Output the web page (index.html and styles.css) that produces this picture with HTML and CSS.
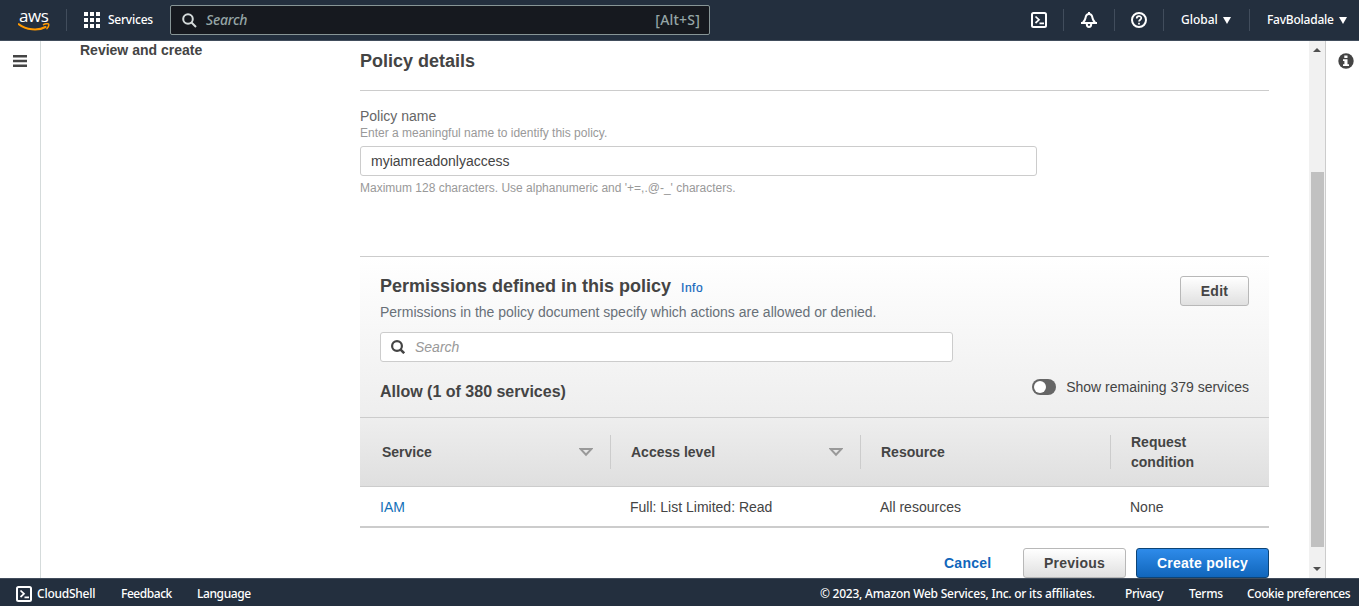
FILE: index.html
```html
<!DOCTYPE html>
<html lang="en">
<head>
<meta charset="utf-8">
<title>Create policy</title>
<link rel="stylesheet" href="styles.css">
</head>
<body>
<header class="topbar">
  <div class="logo"><span class="logo-text">aws</span>
    <svg class="smile" width="32" height="9" viewBox="0 0 32 9"><path d="M.8 1.2C8 7 20 8 27.5 4" fill="none" stroke="#f90" stroke-width="2.1" stroke-linecap="round"/><path d="M25.5 1.6C27 .6 30 .4 30.6 1.1C31 2 30.3 4.2 29 5.6" fill="none" stroke="#f90" stroke-width="1.5" stroke-linecap="round"/></svg>
  </div>
  <i class="sep sep-logo"></i>
  <svg class="grid-icon" width="16" height="16" viewBox="0 0 16 16" fill="#fff"><path d="M0 0h4v4H0zM6 0h4v4H6zM12 0h4v4h-4zM0 6h4v4H0zM6 6h4v4H6zM12 6h4v4h-4zM0 12h4v4H0zM6 12h4v4H6zM12 12h4v4h-4z"/></svg>
  <span class="services">Services</span>
  <div class="search-top">
    <svg width="15" height="15" viewBox="0 0 15 15" fill="none" stroke="#d5dbdb" stroke-width="2"><circle cx="6" cy="6" r="4.8"/><path d="M9.5 9.5 14 14"/></svg>
    <span class="ph">Search</span><span class="kbd">[Alt+S]</span>
  </div>
  <div class="tools">
    <svg class="shell" width="16" height="16" viewBox="0 0 16 16" fill="none" stroke="#fff" stroke-width="2"><rect x="1" y="1" width="14" height="14" rx="1.5"/><path d="M4.5 4.5 8 7.8 4.5 11M8.5 11.3H13" stroke-width="1.7"/></svg>
    <i class="sep s1"></i>
    <svg class="bell" width="16" height="16" viewBox="0 0 16 16" fill="none" stroke="#fff" stroke-width="2"><path d="M8 0v2M8 2C5.8 2 4.8 3.8 4.5 6C4.2 8 3 9.3 1.6 11H14.4C13 9.3 11.8 8 11.5 6C11.2 3.8 10.2 2 8 2Z"/><path d="M0 11h16"/><path d="M5.8 12c0 4 4.4 4 4.4 0"/></svg>
    <i class="sep s2"></i>
    <svg class="help" width="16" height="16" viewBox="0 0 16 16" fill="none" stroke="#fff" stroke-width="2"><circle cx="8" cy="8" r="7"/><path d="M5.7 6.4C5.7 3.3 10.3 3.4 10.3 6.1C10.3 7.7 8 7.8 8 9.6M8 10.7v1.8" stroke-width="1.7"/></svg>
    <i class="sep s3"></i>
    <span class="region">Global</span><i class="caret"></i>
    <i class="sep s4"></i>
    <span class="user">FavBoladale</span><i class="caret"></i>
  </div>
</header>
<div class="middle">
  <aside class="left-rail"><svg width="14" height="12" viewBox="0 0 14 12" fill="#444"><path d="M0 0h14v2.4H0zM0 4.8h14v2.4H0zM0 9.6h14V12H0z"/></svg></aside>
  <nav class="steps">Review and create</nav>
  <main class="content">
    <h2 class="title">Policy details</h2>
    <section class="name-field">
      <label>Policy name</label>
      <p class="hint">Enter a meaningful name to identify this policy.</p>
      <div class="input">myiamreadonlyaccess</div>
      <p class="hint">Maximum 128 characters. Use alphanumeric and '+=,.@-_' characters.</p>
    </section>
    <section class="panel">
      <div class="panel-head">
        <div class="head-row"><h3>Permissions defined in this policy</h3><span class="info">Info</span><span class="btn edit">Edit</span></div>
        <p class="desc">Permissions in the policy document specify which actions are allowed or denied.</p>
        <div class="filter"><svg width="14" height="14" viewBox="0 0 14 14" fill="none" stroke="#444"><circle cx="6" cy="6" r="4.9" stroke-width="2.2"/><path d="M9.6 9.6 13.2 13.2" stroke-width="2.6"/></svg><span>Search</span></div>
        <div class="allow-row"><h4>Allow (1 of 380 services)</h4><span class="toggle"></span><span class="remaining">Show remaining 379 services</span></div>
      </div>
      <div class="row thead">
        <div class="cell"><span>Service</span><svg class="sort" width="14" height="9" viewBox="0 0 14 9"><path d="M1.5 1H12.5L7 6.8Z" fill="none" stroke="#999" stroke-width="2"/></svg></div>
        <div class="cell"><span>Access level</span><svg class="sort" width="14" height="9" viewBox="0 0 14 9"><path d="M1.5 1H12.5L7 6.8Z" fill="none" stroke="#999" stroke-width="2"/></svg></div>
        <div class="cell"><span>Resource</span></div>
        <div class="cell"><span>Request<br>condition</span></div>
      </div>
      <div class="row tbody"><span class="link">IAM</span><span>Full: List Limited: Read</span><span>All resources</span><span>None</span></div>
    </section>
    <div class="actions"><span class="cancel">Cancel</span><span class="btn prev">Previous</span><span class="btn create">Create policy</span></div>
  </main>
  <div class="scroll"><i class="arrow up"></i><i class="thumb"></i><i class="arrow down"></i></div>
  <aside class="right-rail"><svg width="16" height="16" viewBox="0 0 16 16"><circle cx="8" cy="8" r="7.7" fill="#444"/><path d="M6.3 2.6h3.2v2.5H6.3zM5 6.3h4.5v4.9H11v1.9H5v-1.9h1.4V8.1H5z" fill="#fff"/></svg></aside>
</div>
<footer class="footer">
  <svg width="16" height="16" viewBox="0 0 16 16" fill="none" stroke="#fff" stroke-width="2"><rect x="1" y="1" width="14" height="14" rx="1.5"/><path d="M4.5 4.5 8 7.8 4.5 11M8.5 11.3H13" stroke-width="1.7"/></svg>
  <span class="f-shell">CloudShell</span><span class="f-feed">Feedback</span><span class="f-lang">Language</span>
  <span class="f-copy">© 2023, Amazon Web Services, Inc. or its affiliates.</span><span class="f-priv">Privacy</span><span class="f-terms">Terms</span><span class="f-cookie">Cookie preferences</span>
</footer>
</body>
</html>
```
FILE: styles.css
```css
* { box-sizing: border-box; margin: 0; padding: 0; }
body { width: 1359px; height: 606px; overflow: hidden; display: flex; flex-direction: column; background: #fff; color: #444; font: 14px/20px "Liberation Sans", Arial, sans-serif; white-space: nowrap; }
svg { display: block; flex: none; }

.topbar { height: 41px; flex: none; display: flex; align-items: center; background: #232f3e; border-bottom: 1px solid #414d5c; color: #fff; font: 500 12px/20px "Noto Sans", "Open Sans", sans-serif; letter-spacing: -.23px; }
.logo { width: 32px; height: 22px; margin-left: 18px; }
.logo-text { display: block; height: 14px; padding-left: 1px; font: 500 17px/13px "Open Sans", sans-serif; letter-spacing: -.4px; }
.sep { width: 1px; height: 22px; flex: none; background: #414d5c; }
.sep-logo { margin-left: 16px; }
.grid-icon { margin-left: 17px; }
.services { width: 46px; margin: 0 16px 0 8px; }
.search-top { width: 540px; height: 30px; display: flex; align-items: center; padding: 0 9px 0 11px; background: #16191f; border: 1px solid #879596; border-radius: 2px; color: #95a5a6; font-size: 14px; }
.ph { margin-left: 9px; font-style: italic; letter-spacing: -.2px; }
.kbd { margin-left: auto; letter-spacing: .2px; }
.tools { flex: 1; display: flex; align-items: center; padding-left: 321px; }
.s1 { margin-left: 16px; }
.bell { margin-left: 17px; }
.s2 { margin-left: 17px; }
.help { margin-left: 16px; }
.s3 { margin-left: 16px; }
.region { width: 36px; margin-left: 17px; letter-spacing: 0; }
.caret { margin-left: 6px; border: 4px solid transparent; border-top: 7px solid #fff; border-bottom: 0; }
.s4 { margin-left: 18px; }
.user { width: 66px; margin-left: 17px; }

.middle { height: 537px; flex: none; display: flex; }
.left-rail { width: 41px; border-right: 1px solid #d5dbdb; padding: 14px 0 0 13px; }
.steps { width: 319px; padding-left: 39px; line-height: 18px; font-weight: bold; }
.content { width: 949px; height: 537px; overflow: hidden; padding-right: 40px; }
.title { height: 50px; padding-top: 10px; border-bottom: 1px solid #ccc; font-size: 18px; line-height: 20px; }
.name-field { height: 165px; padding-top: 16px; color: #666; }
.name-field label { display: block; line-height: 18px; }
.hint { font-size: 12px; line-height: 16px; color: #999; }
.input { width: 677px; height: 30px; margin: 5px 0 4px; padding: 0 10px; border: 1px solid #ccc; border-radius: 3px; color: #444; line-height: 28px; }
.panel { border-top: 1px solid #ccc; border-bottom: 2px solid #ccc; }
.panel-head { height: 160px; padding: 19px 20px 0; background: linear-gradient(#fff, #eee); }
.head-row { display: flex; height: 26px; }
h3 { font-size: 18px; line-height: 20px; }
.info { margin-left: 10px; font-size: 12px; line-height: 24px; letter-spacing: .5px; color: #1166bb; -webkit-text-stroke: .2px #1166bb; }
.btn { height: 30px; border: 1px solid #b8b8b8; border-radius: 3px; background: linear-gradient(#fff, #e0e0e0); font-weight: bold; line-height: 28px; text-align: center; letter-spacing: .25px; }
.edit { width: 69px; margin-left: auto; letter-spacing: .3px; }
.desc { line-height: 20px; color: #687078; }
.filter { width: 573px; height: 30px; display: flex; align-items: center; margin-top: 10px; padding-left: 10px; background: #fff; border: 1px solid #ccc; border-radius: 3px; }
.filter span { margin-left: 10px; font-style: italic; color: #999; }
.allow-row { display: flex; align-items: flex-start; margin-top: 15px; }
h4 { font-size: 16px; line-height: 20px; padding-top: 5px; }
.toggle { width: 24px; height: 16px; margin: 2px 0 0 auto; border-radius: 8px; background: #666; display: flex; align-items: center; padding-left: 2px; }
.toggle::before { content: ""; width: 12px; height: 12px; border-radius: 50%; background: #fff; }
.remaining { margin-left: 10px; }
.row { display: grid; grid-template-columns: 251px 250px 250px 158px; }
.thead { height: 70px; align-items: center; border: solid #ccc; border-width: 1px 0; background: linear-gradient(#eee, #dfdfdf); font-weight: bold; }
.cell { height: 34px; display: flex; align-items: center; justify-content: space-between; padding: 0 17px 0 20px; border-right: 1px solid #ccc; }
.cell:first-child { padding-left: 22px; }
.cell:last-child { border: 0; }
.tbody { height: 39px; line-height: 40px; }
.tbody span { padding-left: 19px; }
.tbody .link { padding-left: 20px; color: #1170b8; }
.actions { display: flex; margin-top: 20px; justify-content: flex-end; }
.cancel { width: 48px; margin-right: 31px; font-weight: bold; line-height: 30px; letter-spacing: .25px; color: #1166bb; }
.prev { width: 103px; margin-right: 10px; }
.create { width: 133px; background: linear-gradient(#2e8bea, #1166bb); border-color: #0d4476; color: #fff; }
.scroll { width: 17px; display: flex; flex-direction: column; align-items: center; border-right: 1px solid #ccc; background: #f1f1f1; }
.arrow { border: 4px solid transparent; }
.up { margin-top: 7px; border-top: 0; border-bottom-color: #505050; }
.down { margin-top: 20px; border-bottom: 0; border-top-color: #505050; }
.thumb { width: 13px; height: 375px; margin-top: 120px; margin-left: 1px; background: #c1c1c1; }
.right-rail { padding: 12px 0 0 12px; }
.footer { height: 28px; display: flex; align-items: center; border-top: 1px solid #414d5c; padding: 3px 0 0 16px; background: #232f3e; color: #fff; font: 500 12px/20px "Noto Sans", "Open Sans", sans-serif; letter-spacing: -.24px; }
.footer span { flex: none; }
.f-shell { width: 60px; margin-left: 5px; }
.f-feed { width: 51px; margin-left: 24px; letter-spacing: -.45px; }
.f-lang { width: 54px; margin-left: 25px; letter-spacing: -.4px; }
.f-copy { width: 276px; margin-left: 569px; }
.f-priv { width: 39px; margin-left: 29px; letter-spacing: -.4px; }
.f-terms { width: 33px; margin-left: 25px; }
.f-cookie { margin-left: 25px; letter-spacing: -.4px; }
```
